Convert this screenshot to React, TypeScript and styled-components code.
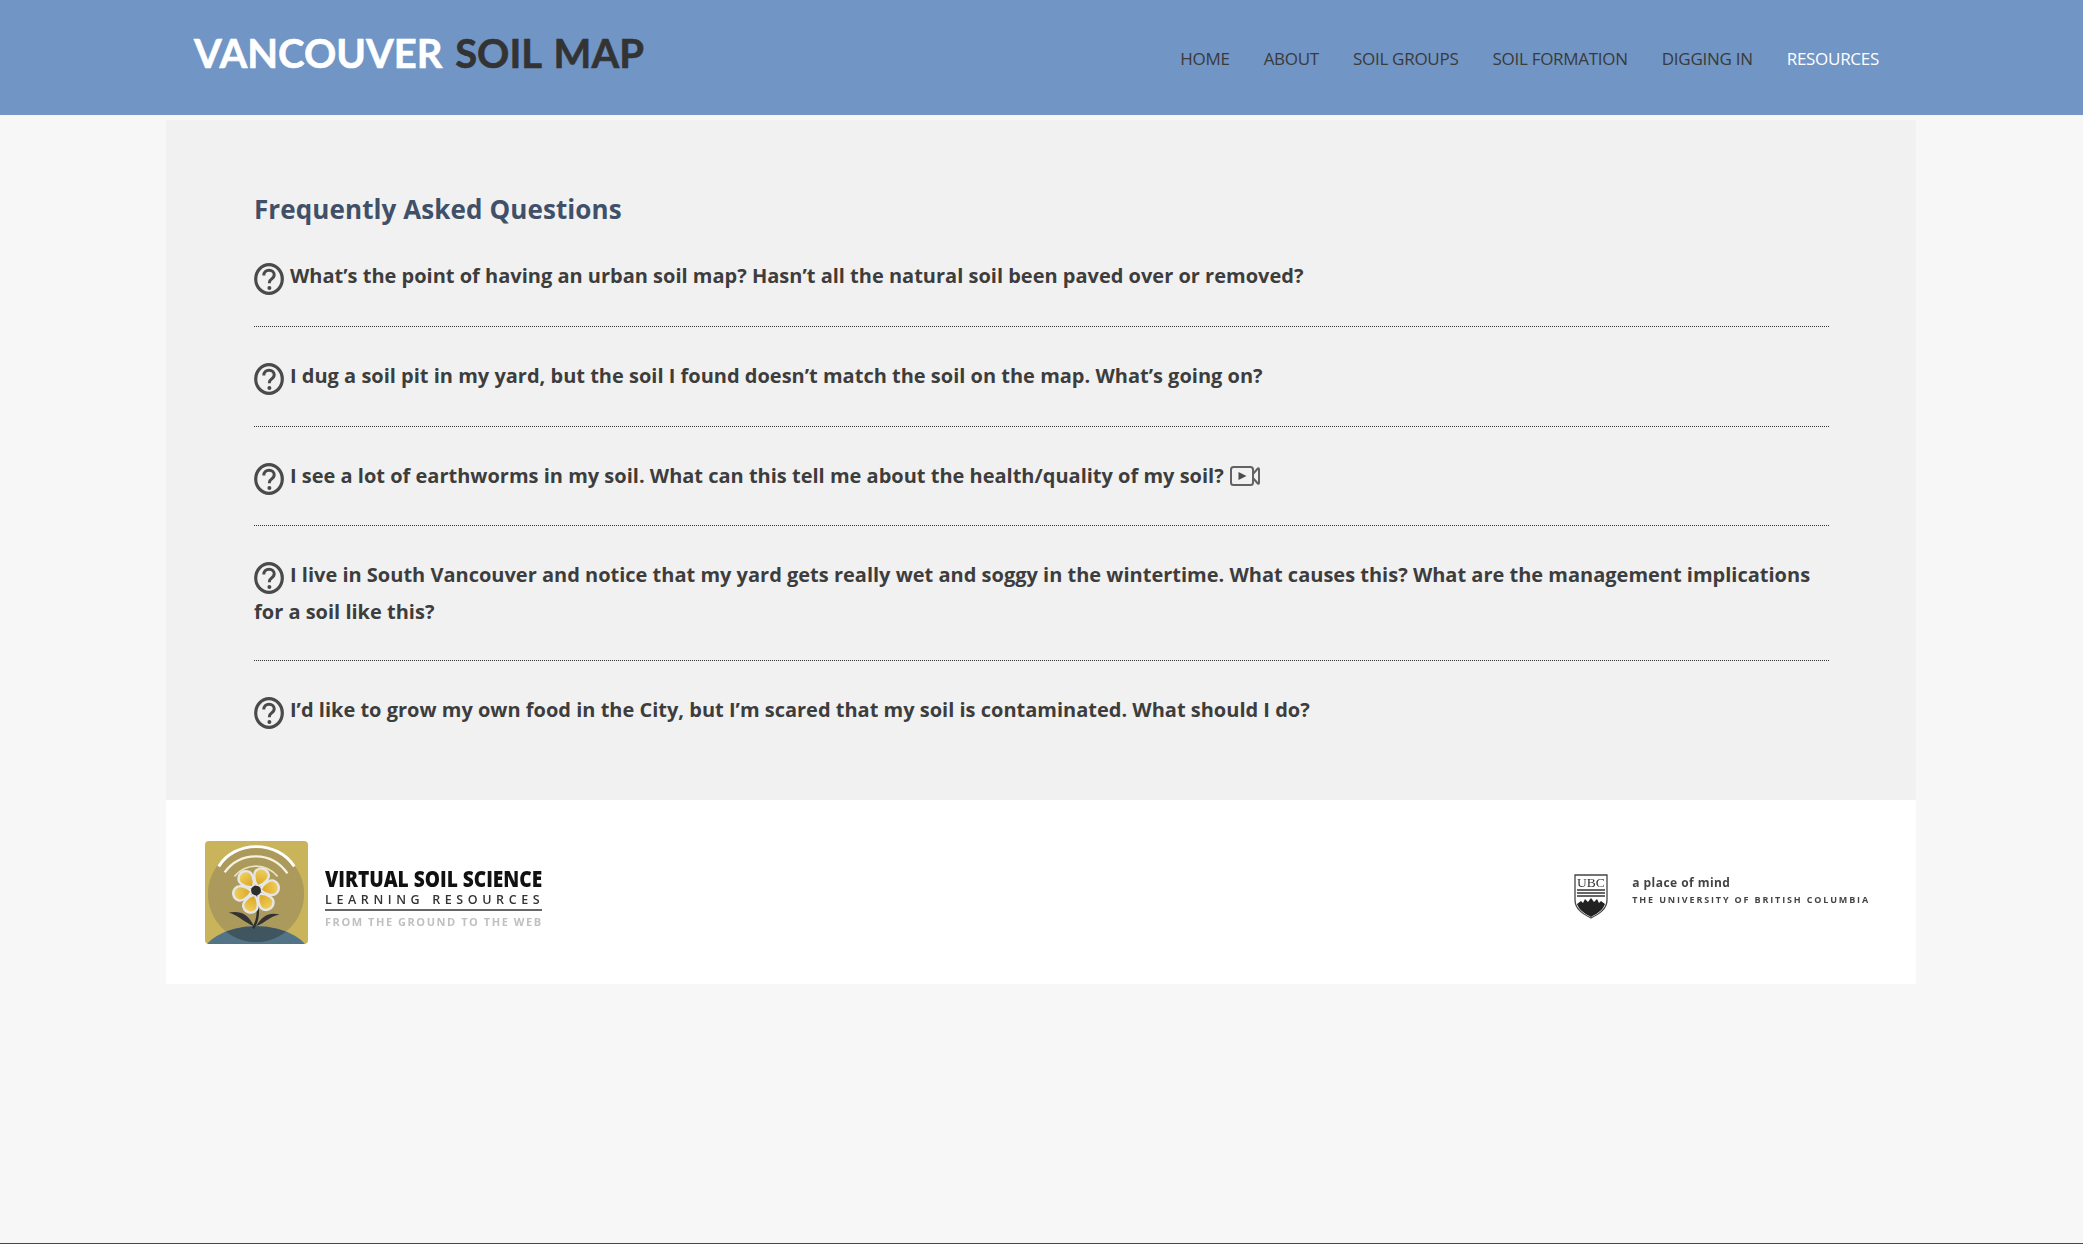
import React from "react";
import styled, { createGlobalStyle } from "styled-components";

const GlobalStyle = createGlobalStyle`
  html, body {
    margin: 0;
    padding: 0;
    background: #f7f7f7;
  }
  * {
    box-sizing: border-box;
  }
`;

const navItems = ["HOME", "ABOUT", "SOIL GROUPS", "SOIL FORMATION", "DIGGING IN", "RESOURCES"];

const QuestionIcon = () => (
  <QIcon viewBox="0 0 30 32" preserveAspectRatio="none" aria-hidden="true">
    <ellipse cx="15" cy="16" rx="13.3" ry="14.3" fill="none" stroke="#4a4a4a" strokeWidth="3.2" />
    <path
      d="M9.800 12.500c0-3.200 2.200-5.200 5.300-5.200s5.100 1.900 5.100 4.500c0 2-1.100 3.100-2.600 4.100-1.600 1.100-2.200 1.900-2.200 3.600v.7"
      fill="none"
      stroke="#4a4a4a"
      strokeWidth="3"
    />
    <circle cx="15.400" cy="25" r="2" fill="#4a4a4a" />
  </QIcon>
);

const VideoIcon = () => (
  <VIcon viewBox="0 0 30 20" aria-hidden="true">
    <rect x="1" y="1" width="22" height="18" rx="2.500" fill="none" stroke="#626262" strokeWidth="2" />
    <path d="M8.500 6l8 4-8 4z" fill="#4a4a4a" />
    <path d="M23 8l4.800-5.500c.6-.6 1.200-.2 1.200.6v13.800c0 .8-.6 1.200-1.200.6L23 12" fill="none" stroke="#626262" strokeWidth="2" />
  </VIcon>
);

const FlowerLogo = () => (
  <FlowerSvg viewBox="0 0 105 105" aria-hidden="true">
    <defs>
      <clipPath id="tile">
        <rect width="105" height="105" rx="4" />
      </clipPath>
      <clipPath id="disc">
        <circle cx="52" cy="54" r="49" />
      </clipPath>
      <linearGradient id="petal" x1="0" y1="0" x2="0" y2="1">
        <stop offset="0" stopColor="#f0d060" />
        <stop offset="1" stopColor="#d9a420" />
      </linearGradient>
    </defs>
    <g clipPath="url(#tile)">
      <rect width="105" height="105" fill="#c9b45c" />
      <circle cx="52" cy="54" r="49" fill="#ab9a5c" />
      <ellipse cx="52" cy="120" rx="56" ry="33" fill="#537386" />
      <ellipse cx="52" cy="120" rx="56" ry="33" fill="#3f5560" clipPath="url(#disc)" />
      <g fill="none">
        <path d="M14 26C30 -1 74 -1 91 26" strokeWidth="3" stroke="#fff" />
        <path d="M20 32C36 10 68 10 84 33" strokeWidth="2.400" stroke="#f7f2de" />
        <path d="M30 36C42 22 62 22 74 36" strokeWidth="1.800" stroke="#ece3be" />
      </g>
      <path d="M52 52C54 68 56 78 49 89" fill="none" stroke="#2f2f2f" strokeWidth="2.500" />
      <path d="M50 87C44 74 36 71 24 73 34 76 40 83 50 87z" fill="#333" />
      <path d="M52 87C58 76 66 72 76 75 68 76 62 83 52 87z" fill="#333" />
      {[20, 80, 140, 200, 260, 320].map((a) => (
        <path
          key={a}
          d="M52 46C45 41 43 33 46 30 49 26 55 26 58 30 61 33 59 41 52 46z"
          fill="url(#petal)"
          stroke="#e6e6e6"
          strokeWidth="2.400"
          transform={`rotate(${a} 52 50.500)`}
        />
      ))}
      <circle cx="52" cy="50.500" r="5" fill="#2d2d2d" />
    </g>
  </FlowerSvg>
);

const UbcShield = () => (
  <ShieldSvg viewBox="0 0 34 45" aria-hidden="true">
    <path d="M1 1h32v25c0 9-8 14-16 18C9 40 1 35 1 26z" fill="#fff" stroke="#444" strokeWidth="1.300" />
    <text x="17" y="13" textAnchor="middle" fontFamily="Liberation Serif, serif" fontSize="13.500" fill="#333">
      UBC
    </text>
    <path d="M3 16h28M3 19h28M3 22h28" stroke="#333" strokeWidth="1.300" />
    <path d="M3 30l4-3 2 2 2-4 3 3 3-4 3 4 3-3 2 4 2-2 4 3c-2 6-7 9-14 13C10 39 5 36 3 30z" fill="#222" />
  </ShieldSvg>
);

const App: React.FC = () => {
  return (
    <Page>
      <GlobalStyle />
      <Header>
        <Logo>
          VANCOUVER <span>SOIL MAP</span>
        </Logo>
        <Nav>
          {navItems.map((item) => (
            <NavLink key={item} $active={item === "RESOURCES"}>
              {item}
            </NavLink>
          ))}
        </Nav>
      </Header>
      <Wrapper>
        <Panel>
          <Title>Frequently Asked Questions</Title>
          <Question>
            <QuestionIcon />
            What’s the point of having an urban soil map? Hasn’t all the natural soil been paved over or removed?
          </Question>
          <Question>
            <QuestionIcon />
            I dug a soil pit in my yard, but the soil I found doesn’t match the soil on the map. What’s going on?
          </Question>
          <Question>
            <QuestionIcon />
            I see a lot of earthworms in my soil. What can this tell me about the health/quality of my soil? <VideoIcon />
          </Question>
          <Question>
            <QuestionIcon />
            I live in South Vancouver and notice that my yard gets really wet and soggy in the wintertime. What causes
            this? What are the management implications for a soil like this?
          </Question>
          <Question $last>
            <QuestionIcon />
            I’d like to grow my own food in the City, but I’m scared that my soil is contaminated. What should I do?
          </Question>
        </Panel>
        <Footer>
          <VssLogo>
            <FlowerLogo />
            <VssText>
              <VssName>VIRTUAL SOIL SCIENCE</VssName>
              <VssSub>LEARNING RESOURCES</VssSub>
              <VssTag>FROM THE GROUND TO THE WEB</VssTag>
            </VssText>
          </VssLogo>
          <UbcLogo>
            <UbcShield />
            <UbcText>
              <UbcMotto>a place of mind</UbcMotto>
              <UbcName>THE UNIVERSITY OF BRITISH COLUMBIA</UbcName>
            </UbcText>
          </UbcLogo>
        </Footer>
      </Wrapper>
    </Page>
  );
};
export default App;

const Page = styled.div`
  min-height: 100vh;
  background: #f7f7f7;
  border-bottom: 1px solid #1f5566;
  font-family: "Open Sans", "Liberation Sans", sans-serif;
`;

const Header = styled.header`
  height: 115px;
  background: #7195c4;
  padding: 0 204px 0 194px;
  display: flex;
  justify-content: space-between;
`;

const Logo = styled.div`
  margin-top: 27px;
  font-family: "Lato", sans-serif;
  font-weight: 700;
  font-size: 40px;
  line-height: 52px;
  word-spacing: 3px;
  -webkit-text-stroke: 0.6px currentColor;
  color: #fff;
  white-space: pre;
  span {
    color: #333;
  }
`;

const Nav = styled.nav`
  display: flex;
  gap: 34px;
  margin-top: 47px;
`;

const NavLink = styled.a<{ $active?: boolean }>`
  font-size: 17px;
  line-height: 24px;
  letter-spacing: -0.280px;
  color: ${(p) => (p.$active ? "#fff" : "#3a3a3a")};
`;

const Wrapper = styled.main`
  width: 1750px;
  margin: 5px 0 0 166px;
`;

const Panel = styled.section`
  background: #f1f1f1;
  padding: 71px 87px 71px 88px;
`;

const Title = styled.h2`
  margin: 0;
  font-size: 26px;
  line-height: 36px;
  font-weight: 700;
  letter-spacing: 0.100px;
  color: #3f5068;
`;

const Question = styled.div<{ $last?: boolean }>`
  font-size: 20px;
  line-height: 35px;
  font-weight: 700;
  color: #3d3d3d;
  padding: 31px 0 ${(p) => (p.$last ? "0" : "30.750px")};
  border-bottom: ${(p) => (p.$last ? "none" : "1px dotted #333")};
`;

const QIcon = styled.svg`
  width: 30px;
  height: 32px;
  margin-right: 6px;
  vertical-align: -12px;
`;

const VIcon = styled.svg`
  width: 30px;
  height: 20px;
  margin-left: 1px;
  vertical-align: -3px;
`;

const Footer = styled.footer`
  height: 184px;
  background: #fff;
  padding: 41px 46px 0 39px;
  display: flex;
  justify-content: space-between;
`;

const VssLogo = styled.div`
  display: flex;
  gap: 17px;
  filter: blur(0.4px);
`;

const FlowerSvg = styled.svg`
  width: 103px;
  height: 103px;
  flex: none;
`;

const VssText = styled.div`
  width: 217px;
  padding-top: 25px;
`;

const VssName = styled.div`
  width: 217px;
  font-weight: 800;
  font-size: 23px;
  line-height: 24px;
  color: #111;
  white-space: nowrap;
  transform: scaleX(0.832);
  transform-origin: left center;
`;

const VssSub = styled.div`
  margin-top: 3px;
  font-size: 12.500px;
  line-height: 14px;
  font-weight: 600;
  letter-spacing: 4.600px;
  color: #333;
  border-bottom: 2px solid #666;
  padding-bottom: 2px;
  white-space: nowrap;
`;

const VssTag = styled.div`
  margin-top: 5px;
  font-size: 11px;
  line-height: 12px;
  font-weight: 700;
  letter-spacing: 1.550px;
  color: #c0c0c0;
  white-space: nowrap;
`;

const UbcLogo = styled.div`
  display: flex;
  gap: 24px;
  padding-top: 33px;
  filter: blur(0.3px);
`;

const ShieldSvg = styled.svg`
  width: 34px;
  height: 45px;
  flex: none;
`;

const UbcText = styled.div`
  padding-top: 0;
`;

const UbcMotto = styled.div`
  font-size: 12px;
  line-height: 18px;
  font-weight: 700;
  letter-spacing: 0.450px;
  color: #444;
`;

const UbcName = styled.div`
  font-size: 9px;
  line-height: 16px;
  font-weight: 700;
  letter-spacing: 1.850px;
  color: #444;
  white-space: nowrap;
`;
